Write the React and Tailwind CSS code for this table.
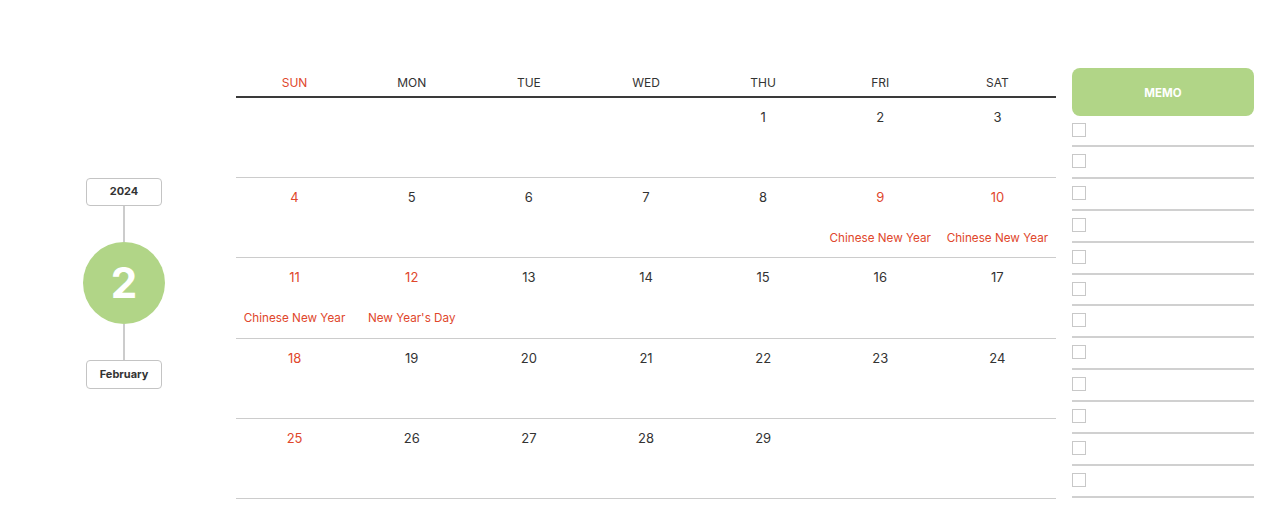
const days = ['SUN', 'MON', 'TUE', 'WED', 'THU', 'FRI', 'SAT'];

const holidays = {
  9: 'Chinese New Year',
  10: 'Chinese New Year',
  11: 'Chinese New Year',
  12: "New Year's Day",
};
const redDays = new Set([4, 9, 10, 11, 12, 18, 25]);

// Feb 2024 starts on Thursday
const cells = [];
for (let i = 0; i < 4; i++) cells.push(null);
for (let d = 1; d <= 29; d++) cells.push(d);
while (cells.length < 35) cells.push(null);
const weeks = [];
for (let i = 0; i < cells.length; i += 7) weeks.push(cells.slice(i, i + 7));

function DayCell({ day }) {
  if (!day) return <div className="flex-1" />;
  const red = redDays.has(day);
  return (
    <div className="flex-1 flex flex-col items-center pt-[11px]">
      <span className={`text-[13px] leading-[16px] ${red ? 'text-[#e0472c]' : 'text-[#333333]'}`}>{day}</span>
      {holidays[day] && (
        <span className="mt-[25px] text-[11.7px] leading-[16px] text-[#e0472c]">{holidays[day]}</span>
      )}
    </div>
  );
}

export default function App() {
  return (
    <div className="w-[1280px] h-[522px] bg-white pt-[68px] flex font-['Inter',sans-serif]">
      {/* Left badge */}
      <div className="w-[236px] h-[430px] flex items-center pl-[86px]">
        <div className="w-[76px] flex flex-col items-center">
          <div className="w-[76px] h-[28px] border border-[#c4c4c4] rounded-[4px] flex items-center justify-center text-[11px] font-bold text-[#333333]">
            2024
          </div>
          <div className="w-[2px] h-[36px] bg-[#cccccc]" />
          <div className="w-[82px] h-[82px] rounded-full bg-[#b1d587] flex items-center justify-center text-white text-[42px] font-bold leading-none">
            2
          </div>
          <div className="w-[2px] h-[36px] bg-[#cccccc]" />
          <div className="w-[76px] h-[29px] border border-[#c4c4c4] rounded-[4px] flex items-center justify-center text-[11px] font-bold text-[#333333]">
            February
          </div>
        </div>
      </div>

      {/* Calendar */}
      <div className="w-[820px] flex flex-col">
        <div className="h-[30px] flex border-b-[2px] border-[#3a3a3a]">
          {days.map((d, i) => (
            <div
              key={d}
              className={`flex-1 flex items-center justify-center text-[12px] pt-[1px] ${i === 0 ? 'text-[#e0472c]' : 'text-[#333333]'}`}
            >
              {d}
            </div>
          ))}
        </div>
        {weeks.map((w, wi) => (
          <div key={wi} className={`${wi === 0 ? 'h-[80px]' : 'h-[80.25px]'} flex border-b border-[#cccccc]`}>
            {w.map((d, di) => (
              <DayCell key={di} day={d} />
            ))}
          </div>
        ))}
      </div>

      {/* Memo */}
      <div className="w-[182px] ml-[16px] flex flex-col">
        <div className="h-[48px] rounded-[8px] bg-[#b1d587] flex items-center justify-center pt-[3px] text-white text-[11.5px] font-bold">
          MEMO
        </div>
        {Array.from({ length: 12 }).map((_, i) => (
          <div
            key={i}
            className={`${i === 0 ? 'h-[31px]' : 'h-[31.9px]'} flex items-center border-b-2 border-[#d0d0d0] pb-[2px]`}
          >
            <div className="w-[14px] h-[14px] border border-[#c8c8c8]" />
          </div>
        ))}
      </div>
    </div>
  );
}
